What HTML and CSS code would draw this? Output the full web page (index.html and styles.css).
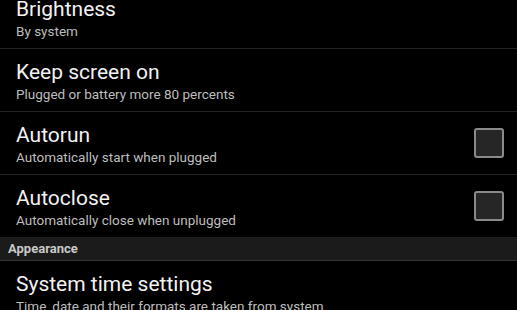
FILE: index.html
```html
<!DOCTYPE html>
<html lang="en">
<head>
    <meta charset="UTF-8">
    <meta name="viewport" content="width=device-width, initial-scale=1.0">
    <title>Settings</title>
    <link rel="stylesheet" href="styles.css">
</head>
<body>
    <!-- Список настроек (прокручен вниз) -->
    <div class="prefs">
        <div class="pref">
            <div class="pref-text">
                <div class="pref-title">Brightness</div>
                <div class="pref-summary">By system</div>
            </div>
        </div>
        <div class="pref">
            <div class="pref-text">
                <div class="pref-title">Keep screen on</div>
                <div class="pref-summary">Plugged or battery more 80 percents</div>
            </div>
        </div>
        <div class="pref">
            <div class="pref-text">
                <div class="pref-title">Autorun</div>
                <div class="pref-summary">Automatically start when plugged</div>
            </div>
            <div class="checkbox"></div>
        </div>
        <div class="pref">
            <div class="pref-text">
                <div class="pref-title">Autoclose</div>
                <div class="pref-summary">Automatically close when unplugged</div>
            </div>
            <div class="checkbox"></div>
        </div>

        <!-- Заголовок категории -->
        <div class="category">Appearance</div>

        <div class="pref">
            <div class="pref-text">
                <div class="pref-title">System time settings</div>
                <div class="pref-summary">Time, date and their formats are taken from system</div>
            </div>
        </div>
    </div>
</body>
</html>
```

FILE: styles.css
```css
/* Общие стили */
html, body {
    height: 100%;
}
body {
    margin: 0;
    background-color: #000;
    font-family: Roboto, "Noto Sans", sans-serif;
    overflow: hidden;
}
/* Список */
.prefs {
    margin-top: -14px;
}
.pref {
    display: flex;
    align-items: center;
    height: 62px;
    padding: 0 13px 0 16px;
    box-sizing: border-box;
}
.pref + .pref {
    border-top: 1px solid #222;
    height: 63px;
}
.pref-text {
    flex: 1;
    padding-top: 3px;
}
.pref-title {
    font-size: 21px;
    line-height: 26px;
    color: #f2f2f2;
}
.pref-summary {
    font-size: 13.5px;
    line-height: 19px;
    color: #bdbdbd;
}
/* Чекбокс */
.checkbox {
    width: 30px;
    height: 30px;
    box-sizing: border-box;
    border: 2px solid #8a8a8a;
    border-radius: 3px;
    background-color: #262626;
}
/* Категория */
.category {
    height: 24px;
    line-height: 23px;
    padding-left: 8px;
    box-sizing: border-box;
    background-color: #1b1b1b;
    border-bottom: 1px solid #333;
    color: #c8c8c8;
    font-size: 13px;
    font-weight: bold;
}
```
